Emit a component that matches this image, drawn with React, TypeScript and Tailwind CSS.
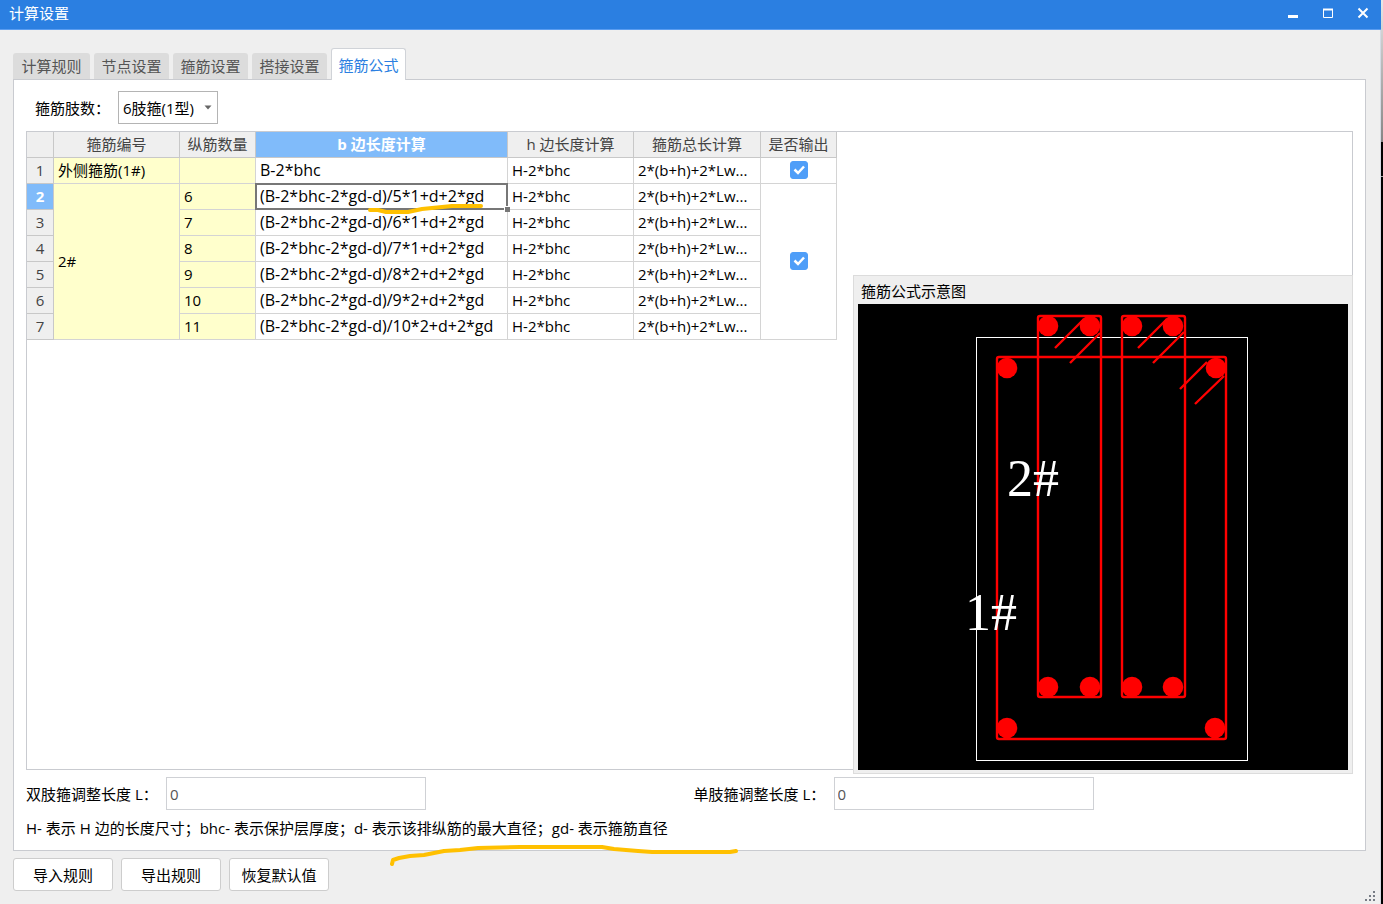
import { useState } from 'react';

const tabs = ['计算规则', '节点设置', '箍筋设置', '搭接设置', '箍筋公式'];

const columns = ['箍筋编号', '纵筋数量', 'b 边长度计算', 'h 边长度计算', '箍筋总长计算', '是否输出'];

interface FormulaRow {
  count: string;
  b: string;
}

const rows: FormulaRow[] = [
  { count: '', b: 'B-2*bhc' },
  { count: '6', b: '(B-2*bhc-2*gd-d)/5*1+d+2*gd' },
  { count: '7', b: '(B-2*bhc-2*gd-d)/6*1+d+2*gd' },
  { count: '8', b: '(B-2*bhc-2*gd-d)/7*1+d+2*gd' },
  { count: '9', b: '(B-2*bhc-2*gd-d)/8*2+d+2*gd' },
  { count: '10', b: '(B-2*bhc-2*gd-d)/9*2+d+2*gd' },
  { count: '11', b: '(B-2*bhc-2*gd-d)/10*2+d+2*gd' },
];

const SELECTED_ROW = 1;
const SELECTED_COL = 2;

// Centers of the longitudinal bars
const bars = [
  [1048, 326], [1090, 326], [1132, 326], [1173, 326],
  [1007, 368], [1216, 368],
  [1048, 687], [1090, 687], [1132, 687], [1173, 687],
  [1007, 728], [1215, 728],
];

function TitleBar() {
  return (
    <header className="flex h-[30px] shrink-0 items-center justify-between border-b border-[#5b9df0] bg-[#2b7fe1] pr-[11px] pl-[9px] text-white">
      <h1 className="pb-1">计算设置</h1>
      <div className="flex gap-[21px] pb-1">
        <button type="button" aria-label="最小化">
          <svg width="14" height="14" viewBox="0 0 14 14">
            <path d="M2 10.5H12" stroke="white" strokeWidth="3" />
          </svg>
        </button>
        <button type="button" aria-label="最大化">
          <svg width="14" height="14" viewBox="0 0 14 14" fill="none" stroke="white">
            <path d="M2.5 3V11.5H11.5V3" />
            <path d="M2 3.5H12" strokeWidth="2" />
          </svg>
        </button>
        <button type="button" aria-label="关闭">
          <svg width="14" height="14" viewBox="0 0 14 14">
            <path d="M2.5 2.5L11.5 11.5M11.5 2.5L2.5 11.5" stroke="white" strokeWidth="2" />
          </svg>
        </button>
      </div>
    </header>
  );
}

function OutputCheckbox({ label }: { label: string }) {
  const [checked, setChecked] = useState(true);
  return (
    <span className="relative mx-auto block size-[18px]">
      <input
        type="checkbox"
        aria-label={label}
        checked={checked}
        onChange={(event) => setChecked(event.target.checked)}
        className="block size-[18px] appearance-none rounded-[3px] border border-[#4f9ef8] bg-white checked:bg-[#4f9ef8]"
      />
      {checked && (
        <svg className="pointer-events-none absolute inset-0" width="18" height="18" viewBox="0 0 18 18">
          <path d="M4.5 8.5L8 12L14 5.5" fill="none" stroke="white" strokeWidth="2.5" />
        </svg>
      )}
    </span>
  );
}

function FormulaTable() {
  const line = 'border-r border-b border-[#d4d4d4] pb-0.5';
  const cell = `${line} pl-1 text-left whitespace-nowrap`;
  const head = 'border-r border-b border-[#c8c8c8] pb-0.5 text-center whitespace-nowrap';

  return (
    <table className="w-[810px] table-fixed border-separate border-spacing-0 leading-5">
      <colgroup>
        <col className="w-[27px]" />
        <col className="w-[126px]" />
        <col className="w-[76px]" />
        <col className="w-[252px]" />
        <col className="w-[126px]" />
        <col className="w-[127px]" />
        <col className="w-[76px]" />
      </colgroup>
      <thead>
        <tr className="h-[26px]">
          <td className={`${head} bg-[#efefef]`} />
          {columns.map((name, index) => (
            <th
              key={name}
              scope="col"
              className={`${head} ${index === SELECTED_COL ? 'bg-[#80bbfa] font-bold text-white' : 'bg-[#efefef] font-normal text-[#444]'}`}
            >
              {name}
            </th>
          ))}
        </tr>
      </thead>
      <tbody>
        {rows.map((row, index) => (
          <tr key={index} className="h-[26px]">
            <th
              scope="row"
              className={`${head} ${index === SELECTED_ROW ? 'bg-[#80bbfa] font-bold text-white' : 'bg-[#efefef] font-normal text-[#444]'}`}
            >
              {index + 1}
            </th>
            {index === 0 && <td className={`${cell} bg-[#ffffcc]`}>外侧箍筋(1#)</td>}
            {index === 1 && <td rowSpan={6} className={`${cell} bg-[#ffffcc]`}>2#</td>}
            <td className={`${cell} bg-[#ffffcc]`}>{row.count}</td>
            <td className={`${cell} text-[16px] ${index === SELECTED_ROW ? 'relative' : ''}`}>
              {row.b}
              {index === SELECTED_ROW && (
                <span className="absolute -inset-px border-2 border-[#777]">
                  <span className="absolute -right-1 -bottom-1 size-[6px] border-t border-l border-white bg-[#777]" />
                </span>
              )}
            </td>
            <td className={cell}>H-2*bhc</td>
            <td className={cell}>2*(b+h)+2*Lw...</td>
            {index === 0 && <td className={line}><OutputCheckbox label="输出 1#" /></td>}
            {index === 1 && <td rowSpan={6} className={line}><OutputCheckbox label="输出 2#" /></td>}
          </tr>
        ))}
      </tbody>
    </table>
  );
}

function StirrupDiagram() {
  return (
    <section className="absolute right-[-1px] bottom-[-5px] w-[500px] border border-[#dcdcdc] bg-[#efefef] px-1 pb-[3px]">
      <h2 className="pt-[5px] pb-[3px] pl-[3px] leading-5">箍筋公式示意图</h2>
      <svg className="block w-full bg-black" viewBox="858 304 490 466">
        <rect x="976.5" y="337.5" width="271" height="423" fill="none" stroke="white" />
        <g fill="none" stroke="#ff0000" strokeWidth="2.4">
          <rect x="997" y="357" width="229" height="382" rx="2" />
          <rect x="1038" y="316" width="63" height="381" rx="2" />
          <rect x="1122" y="316" width="63" height="381" rx="2" />
          {/* hooks */}
          <path d="M1084 319L1055 348M1100 333L1070 363" />
          <path d="M1167 319L1138 348M1184 332L1153 363" />
          <path d="M1207 362L1180 389M1224 376L1195 404" />
        </g>
        <g fill="#ff0000">
          {bars.map(([cx, cy]) => (
            <circle key={`${cx}-${cy}`} cx={cx} cy={cy} r="10.3" />
          ))}
        </g>
        <g className="font-['Liberation_Serif',serif] text-[52px]" fill="white">
          <text x="1007" y="496">2#</text>
          <text x="965" y="630">1#</text>
        </g>
      </svg>
    </section>
  );
}

function LengthField({ id, label }: { id: string; label: string }) {
  const [value, setValue] = useState('0');
  return (
    <div className="flex flex-1 items-center">
      <label htmlFor={id} className="w-[140px] whitespace-nowrap">{label}</label>
      <input
        id={id}
        type="text"
        value={value}
        onChange={(event) => setValue(event.target.value)}
        className="h-[33px] w-[260px] border border-[#cfd1d5] bg-white px-[3px] text-[#555]"
      />
    </div>
  );
}

function App() {
  const [activeTab, setActiveTab] = useState('箍筋公式');
  const button = 'h-[33px] w-[100px] rounded-[3px] border border-[#cdcdcd] bg-white';

  return (
    <div className="relative flex min-h-screen bg-[#efefef] font-['Open_Sans','Noto_Sans_CJK_SC',sans-serif] text-[15px] leading-5 text-black">
      <div className="flex min-w-0 flex-1 flex-col">
        <TitleBar />
        <main className="relative flex flex-1 flex-col border-r border-[#d5dae4] pr-[14px] pb-[13px] pl-[13px]">
          <nav role="tablist" className="relative z-10 mt-[18px] -mb-px flex items-end gap-1">
            {tabs.map((tab) => (
              <button
                key={tab}
                type="button"
                role="tab"
                aria-selected={tab === activeTab}
                onClick={() => setActiveTab(tab)}
                className={
                  tab === activeTab
                    ? 'h-8 w-[75px] rounded-t-[3px] border border-b-0 border-[#d0d3d8] bg-white text-[#2b7fe1]'
                    : 'mb-px h-[26px] w-[75px] rounded-t-[3px] bg-[#dcdcdc] text-[#555] first:w-[77px]'
                }
              >
                {tab}
              </button>
            ))}
          </nav>

          <div className="flex flex-1 flex-col border border-[#c9cbd0] bg-white px-3 pt-[11px] pb-3">
            <div className="flex items-center pl-[9px]">
              <label htmlFor="limbs" className="w-[83px]">箍筋肢数：</label>
              <div className="relative">
                <select id="limbs" className="h-[33px] w-[100px] appearance-none border border-[#b4b4b4] bg-white pl-1">
                  <option>6肢箍(1型)</option>
                </select>
                <svg className="pointer-events-none absolute top-[14px] right-[6px]" width="8" height="5" viewBox="0 0 8 5">
                  <path d="M0.5 0.5H7.5L4 4.5Z" fill="#666" />
                </svg>
              </div>
            </div>

            <div className="relative mt-[7px] flex-1 border border-[#c9cbd0]">
              <FormulaTable />
              <StirrupDiagram />
            </div>

            <div className="mt-[7px] flex gap-2">
              <LengthField id="double-limb" label="双肢箍调整长度 L：" />
              <LengthField id="single-limb" label="单肢箍调整长度 L：" />
            </div>
            <p className="mt-2">
              H- 表示 H 边的长度尺寸；bhc- 表示保护层厚度；d- 表示该排纵筋的最大直径；gd- 表示箍筋直径
            </p>
          </div>

          <footer className="mt-[7px] flex gap-2">
            <button type="button" className={button}>导入规则</button>
            <button type="button" className={button}>导出规则</button>
            <button type="button" className={button}>恢复默认值</button>
          </footer>

          {/* resize grip */}
          <svg className="absolute right-1 bottom-[2px]" width="11" height="11" viewBox="0 0 11 11" fill="#777c85">
            <path d="M8 0h2v2h-2zM4 4h2v2h-2zM8 4h2v2h-2zM0 8h2v2h-2zM4 8h2v2h-2zM8 8h2v2h-2z" />
          </svg>
        </main>
      </div>

      {/* edge of the drawing window behind the dialog */}
      <div className="flex w-[2px] flex-col bg-black">
        <div className="h-[142px] bg-linear-to-b from-[#e8e8e8] to-[#858585]" />
        <div className="mt-[34px] h-px bg-[#aaa]" />
      </div>

      {/* marker strokes */}
      <svg className="pointer-events-none absolute top-0 left-0 z-20" width="760" height="880" fill="none" stroke="#ffc000" strokeWidth="4" strokeLinecap="round" strokeLinejoin="round">
        <path d="M370 210H378L386 212H408L422 209L442 207L452 206H481" />
        <path d="M392 864L393 860L399 858L410 856L424 855L434 853L444 851L460 850L478 848L520 847H602L614 849L626 850L638 851L652 852H730L736 851" />
      </svg>
    </div>
  );
}

export default App;
